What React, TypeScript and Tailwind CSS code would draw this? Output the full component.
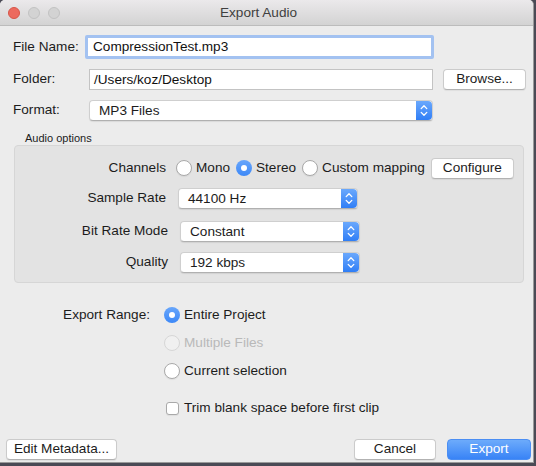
/**
 * Export Audio dialog — macOS style
 */
import type { ReactNode } from 'react';

const FONT = "font-['Liberation_Sans',Arial,sans-serif]";

function Stepper() {
  return (
    <div className="w-[16px] h-full rounded-r-[4px] bg-gradient-to-b from-[#6aa8fc] to-[#2f7ef6] flex items-center justify-center">
      <svg width="8" height="13" viewBox="0 0 8 13" fill="none" stroke="white" strokeWidth="1.3" strokeLinecap="round" strokeLinejoin="round">
        <path d="M1.2 4.6 L4 1.8 L6.8 4.6" />
        <path d="M1.2 8.4 L4 11.2 L6.8 8.4" />
      </svg>
    </div>
  );
}

function Select({ value, width }: { value: string; width: string }) {
  return (
    <div className={`${width} h-[21px] flex bg-white rounded-[4px] border border-[#cfcfcf] border-b-[#b0b0b0] shadow-[0_1px_1px_rgba(0,0,0,0.08)]`}>
      <div className="flex-1 pl-[9px] text-[13.6px] leading-[19px] text-[#1c1c1c]">{value}</div>
      <Stepper />
    </div>
  );
}

function Radio({ checked, disabled, label }: { checked?: boolean; disabled?: boolean; label: string }) {
  return (
    <div className="flex items-center">
      {checked ? (
        <div className="w-[16px] h-[16px] rounded-full bg-gradient-to-b from-[#68a6fb] to-[#3c88f7] flex items-center justify-center">
          <div className="w-[6px] h-[6px] rounded-full bg-white" />
        </div>
      ) : (
        <div
          className={`w-[16px] h-[16px] rounded-full border ${
            disabled ? 'border-[#d6d6d6] bg-[#f0f0f0]' : 'border-[#a9a9a9] bg-white shadow-[0_1px_1px_rgba(0,0,0,0.06)]'
          }`}
        />
      )}
      <span className={`ml-[4px] text-[13.6px] ${disabled ? 'text-[#b9b9b9]' : 'text-[#1c1c1c]'}`}>{label}</span>
    </div>
  );
}

function Button({ children, width, primary }: { children: ReactNode; width: string; primary?: boolean }) {
  return (
    <div
      className={`${width} h-[21px] rounded-[4px] flex items-center justify-center text-[13.6px] ${
        primary
          ? 'bg-gradient-to-b from-[#6dabfb] to-[#3883f6] text-white border border-[#4b8ef3]'
          : 'bg-white text-[#1c1c1c] border border-[#cbcbcb] border-b-[#b2b2b2] shadow-[0_1px_1px_rgba(0,0,0,0.06)]'
      }`}
    >
      {children}
    </div>
  );
}

function OptionRow({ label, labelW, children, className = '' }: { label: string; labelW: string; children: ReactNode; className?: string }) {
  return (
    <div className={`flex items-center ${className}`}>
      <div className={`${labelW} text-right text-[13.6px] text-[#1c1c1c]`}>{label}</div>
      {children}
    </div>
  );
}

export default function App() {
  return (
    <div className={`w-[536px] h-[466px] bg-[#4a4a55] ${FONT}`}>
      <div className="w-[534px] h-[463px] bg-[#ececec] rounded-t-[5px] overflow-hidden flex flex-col border-r border-b border-[#9a9a9a]">
        {/* Title bar */}
        <div className="h-[26px] flex items-center bg-gradient-to-b from-[#ebe9eb] to-[#d3d3d3] border-b border-[#bcbcbc]">
          <div className="flex items-center gap-[8px] pl-[8px]">
            <div className="w-[12px] h-[12px] rounded-full bg-[#ec6a5e] border border-[#d75548]" />
            <div className="w-[12px] h-[12px] rounded-full bg-[#d3d3d3] border border-[#c2c2c2]" />
            <div className="w-[12px] h-[12px] rounded-full bg-[#d3d3d3] border border-[#c2c2c2]" />
          </div>
          <div className="flex-1 text-center text-[13.6px] text-[#3f3f3f] pr-[76px] pt-[1px]">Export Audio</div>
        </div>

        {/* File name */}
        <div className="mt-[9px] flex items-center h-[24px]">
          <div className="w-[85px] pl-[13px] text-[13.6px] text-[#1c1c1c]">File Name:</div>
          <div className="w-[349px] h-[24px] bg-white border-[3px] border-[#a3c2f1] rounded-[2px] pl-[5px] text-[13.6px] leading-[18px] text-[#111]">
            CompressionTest.mp3
          </div>
        </div>

        {/* Folder */}
        <div className="mt-[10px] flex items-center h-[21px]">
          <div className="w-[89px] pl-[13px] text-[13.6px] text-[#1c1c1c]">Folder:</div>
          <div className="w-[344px] h-[21px] bg-white border border-[#c3c3c3] pl-[4px] text-[13.6px] leading-[19px] text-[#111]">
            /Users/koz/Desktop
          </div>
          <div className="ml-[10px]">
            <Button width="w-[83px]">Browse...</Button>
          </div>
        </div>

        {/* Format */}
        <div className="mt-[10px] flex items-center h-[21px]">
          <div className="w-[89px] pl-[13px] text-[13.6px] text-[#1c1c1c]">Format:</div>
          <Select value="MP3 Files" width="w-[344px]" />
        </div>

        {/* Audio options */}
        <div className="mt-[10px] pl-[25px] text-[11px] leading-[14px] text-[#1c1c1c]">Audio options</div>
        <div className="ml-[14px] w-[510px] h-[138px] bg-[#e3e3e3] border border-[#d6d6d6] rounded-[4px] flex flex-col">
          <OptionRow label="Channels" labelW="w-[151px]" className="mt-[12px] h-[21px]">
            <div className="ml-[10px] flex items-center gap-[6px]">
              <Radio label="Mono" />
              <Radio checked label="Stereo" />
              <Radio label="Custom mapping" />
            </div>
            <div className="ml-[6px]">
              <Button width="w-[83px]">Configure</Button>
            </div>
          </OptionRow>
          <OptionRow label="Sample Rate" labelW="w-[151px]" className="mt-[9px] h-[21px]">
            <div className="ml-[12px]">
              <Select value="44100 Hz" width="w-[180px]" />
            </div>
          </OptionRow>
          <OptionRow label="Bit Rate Mode" labelW="w-[153px]" className="mt-[12px] h-[21px]">
            <div className="ml-[12px]">
              <Select value="Constant" width="w-[180px]" />
            </div>
          </OptionRow>
          <OptionRow label="Quality" labelW="w-[153px]" className="mt-[10px] h-[21px]">
            <div className="ml-[12px]">
              <Select value="192 kbps" width="w-[180px]" />
            </div>
          </OptionRow>
        </div>

        {/* Export range */}
        <div className="mt-[22px] flex">
          <div className="w-[150px] text-right text-[13.6px] text-[#1c1c1c] leading-[20px]">Export Range:</div>
          <div className="ml-[14px] flex flex-col gap-[8px]">
            <div className="h-[20px] flex items-center"><Radio checked label="Entire Project" /></div>
            <div className="h-[20px] flex items-center"><Radio disabled label="Multiple Files" /></div>
            <div className="h-[20px] flex items-center"><Radio label="Current selection" /></div>
          </div>
        </div>

        <div className="mt-[17px] ml-[166px] h-[20px] flex items-center">
          <div className="w-[13px] h-[13px] bg-white border border-[#a9a9a9] rounded-[3px] shadow-[0_1px_1px_rgba(0,0,0,0.06)]" />
          <span className="ml-[5px] text-[13.6px] text-[#1c1c1c]">Trim blank space before first clip</span>
        </div>

        {/* Footer buttons */}
        <div className="mt-auto mb-[2px] flex items-center pl-[6px]">
          <Button width="w-[111px]">Edit Metadata...</Button>
          <div className="flex-1" />
          <Button width="w-[82px]">Cancel</Button>
          <div className="ml-[11px] mr-[2px]">
            <Button width="w-[84px]" primary>Export</Button>
          </div>
        </div>
      </div>
    </div>
  );
}
